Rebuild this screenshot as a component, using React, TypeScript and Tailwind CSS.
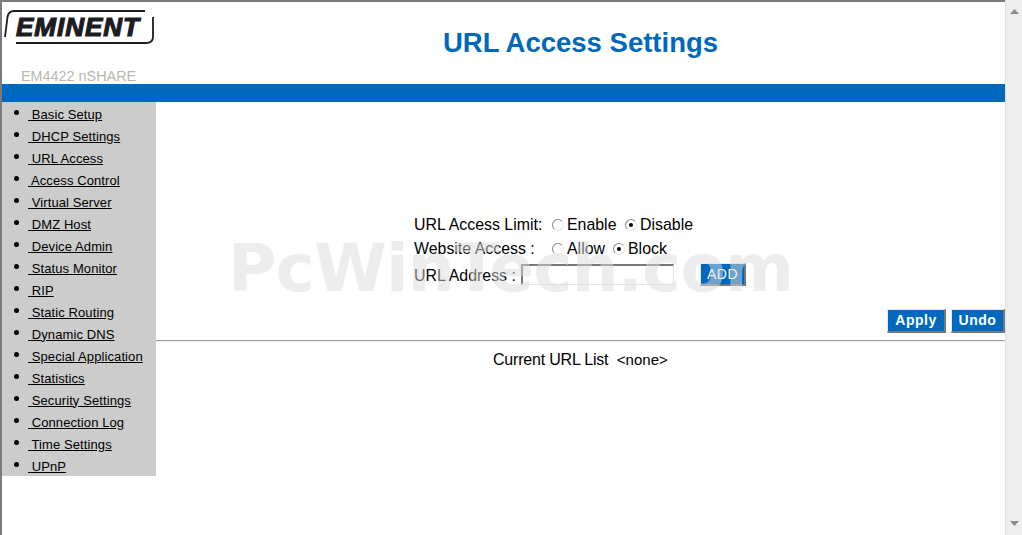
const menu = [
  "Basic Setup",
  "DHCP Settings",
  "URL Access",
  "Access Control",
  "Virtual Server",
  "DMZ Host",
  "Device Admin",
  "Status Monitor",
  "RIP",
  "Static Routing",
  "Dynamic DNS",
  "Special Application",
  "Statistics",
  "Security Settings",
  "Connection Log",
  "Time Settings",
  "UPnP",
];

function Radio({ checked }: { checked?: boolean }) {
  return (
    <span className="mr-[3px] flex h-[12px] w-[12px] items-center justify-center rounded-full border border-t-[#8a8a8a] border-l-[#8a8a8a] border-r-[#e4e4e4] border-b-[#e4e4e4] bg-white">
      {checked && <span className="h-[4px] w-[4px] rounded-full bg-black" />}
    </span>
  );
}

function BlueButton({ label, className }: { label: string; className: string }) {
  return (
    <button
      className={`flex items-center justify-center border border-t-[#e8e8e8] border-l-[#e8e8e8] border-r-2 border-b-2 border-r-[#777] border-b-[#777] bg-[#0069bd] font-bold tracking-[0.5px] text-white ${className}`}
    >
      {label}
    </button>
  );
}

function Logo() {
  return (
    <div className="relative ml-[2px] mt-[8px] h-[35px] w-[151px]">
      <svg width="151" height="35" viewBox="0 0 151 35" className="absolute left-0 top-0">
        <path d="M1 27 L3.5 7 Q4.5 1 10 1 L141 1" fill="none" stroke="#1c1c22" strokeWidth="1.8" />
        <path d="M149 7 L149 27 Q149 33 142 33 L12 33" fill="none" stroke="#1c1c22" strokeWidth="1.8" />
      </svg>
      <span className="absolute left-[12px] top-[1px] text-[26px] font-bold italic leading-[32px] tracking-[1px] text-[#1c1c22] [-webkit-text-stroke:1.2px_#1c1c22]">
        EMINENT
      </span>
    </div>
  );
}

export default function App() {
  return (
    <div className="relative flex h-[535px] w-[1022px] overflow-hidden bg-white font-['Liberation_Sans',Arial,sans-serif] text-black">
      <div className="flex w-[1005px] flex-col border-l-2 border-t-2 border-[#7b7b7b]">
        <header className="flex h-[82px]">
          <div className="w-[154px]">
            <Logo />
            <p className="ml-[19px] mt-[23px] text-[14.4px] leading-[16px] text-[#b8b8b0]">EM4422 nSHARE</p>
          </div>
          <h1 className="flex-1 pt-[25px] text-center text-[27.5px] font-bold leading-[32px] text-[#0069bd]">
            URL Access Settings
          </h1>
        </header>
        <div className="h-[18px] bg-[#0069bd]" />
        <div className="flex flex-1">
          <nav className="h-[374px] w-[154px] bg-[#cccccc] pt-[1px]">
            {menu.map((item) => (
              <div key={item} className="relative flex h-[22px] items-center pl-[26px]">
                <span className="absolute left-[12px] top-[7px] h-[5px] w-[5px] rounded-full bg-black" />
                <a className="mt-[1px] whitespace-pre text-[13px] leading-[16px] tracking-[0.1px] underline">
                  {" " + item}
                </a>
              </div>
            ))}
          </nav>
          <main className="flex-1">
            <div className="ml-[258px] pt-[111px] text-[15.9px] leading-[18px]">
              <div className="flex h-[24px] items-center">
                <span className="w-[138px]">URL Access Limit:</span>
                <Radio />
                <span className="w-[58px]">Enable</span>
                <Radio checked />
                <span>Disable</span>
              </div>
              <div className="flex h-[24px] items-center">
                <span className="w-[138px]">Website Access :</span>
                <Radio />
                <span className="w-[46px]">Allow</span>
                <Radio checked />
                <span>Block</span>
              </div>
              <div className="flex h-[28px] items-center">
                <span className="mt-[1px] w-[107px]">URL Address :</span>
                <input className="-mt-[1px] h-[21px] w-[153px] border border-t-2 border-l-2 border-t-[#777] border-l-[#777] border-r-[#e4e4e4] border-b-[#e4e4e4] bg-transparent" />
                <BlueButton label="ADD" className="-mt-[1px] ml-[26px] h-[23px] w-[46px] text-[14px] font-normal" />
              </div>
            </div>
            <div className="mt-[20px] flex justify-end gap-[5px]">
              <BlueButton label="Apply" className="h-[24px] w-[59px] text-[14px]" />
              <BlueButton label="Undo" className="h-[24px] w-[54px] text-[14px]" />
            </div>
            <div className="mt-[7px] h-[2px] border-t border-[#a0a0a0] bg-[#eeeeee]" />
            <p className="ml-[337px] mt-[8px] whitespace-pre text-[16px] leading-[20px] tracking-[-0.2px]">
              {"Current URL List  "}
              <span className="text-[15px] tracking-normal">{"<none>"}</span>
            </p>
          </main>
        </div>
      </div>
      <div className="flex w-[17px] flex-col items-center justify-between border-l border-[#e0e0e0] bg-[#eeeeee] py-[9px]">
        <svg width="9" height="5" viewBox="0 0 9 5">
          <path d="M4.5 0 L9 5 L0 5 Z" fill="#8a8a8a" />
        </svg>
        <svg width="9" height="5" viewBox="0 0 9 5">
          <path d="M4.5 5 L9 0 L0 0 Z" fill="#8a8a8a" />
        </svg>
      </div>
      <div className="pointer-events-none absolute left-[228px] top-[231px] whitespace-nowrap font-['DejaVu_Sans',sans-serif] text-[66px] font-bold leading-[76px] tracking-[-0.8px] text-[#dbdbdb]/50">
        PcWinTech.com
      </div>
    </div>
  );
}
